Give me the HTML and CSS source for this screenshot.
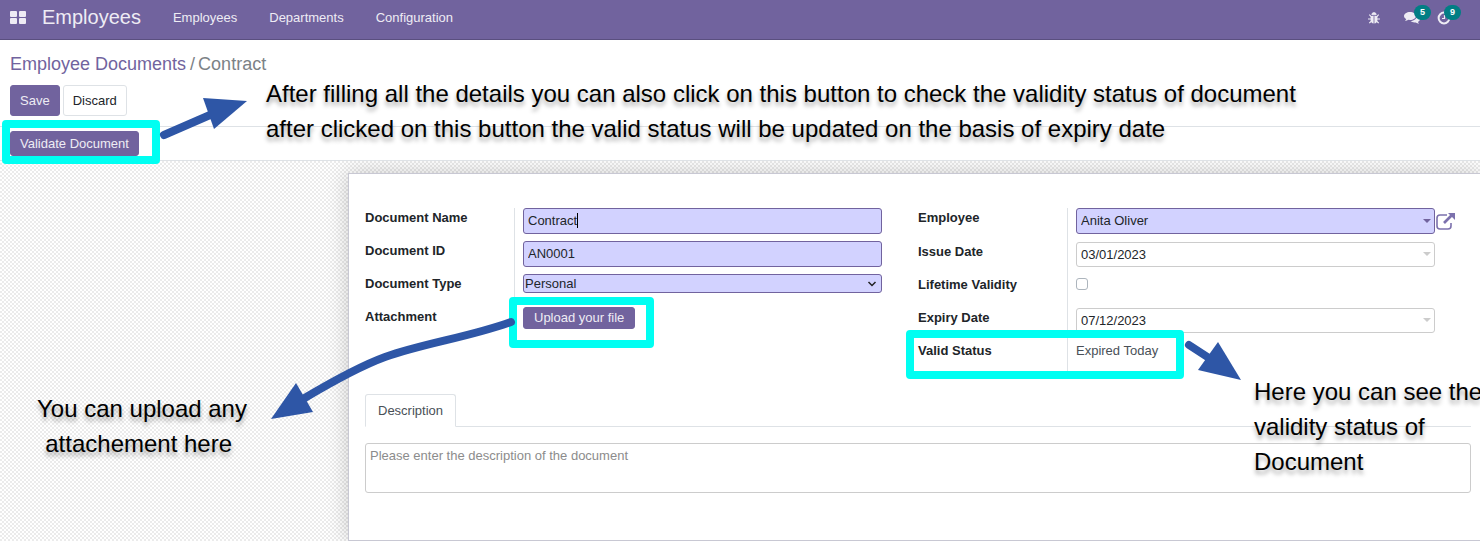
FILE: index.html
```html
<!DOCTYPE html>
<html lang="en">
<head>
<meta charset="utf-8">
<meta name="viewport" content="width=device-width, initial-scale=1">
<title>Employee Documents / Contract</title>
<link rel="stylesheet" href="styles.css">
</head>
<body>
<header class="navbar">
  <button class="apps" type="button" aria-label="Apps">
    <svg width="16" height="14" viewBox="0 0 16 14" fill="currentColor"><rect width="7" height="6" rx="1"/><rect x="9" width="7" height="6" rx="1"/><rect y="7" width="7" height="6" rx="1"/><rect x="9" y="7" width="7" height="6" rx="1"/></svg>
  </button>
  <a class="brand" href="#">Employees</a>
  <nav class="menu">
    <a href="#">Employees</a>
    <a href="#">Departments</a>
    <a href="#">Configuration</a>
  </nav>
  <div class="systray">
    <button class="debug" type="button" aria-label="Debug">
      <svg width="12" height="12" viewBox="0 0 12 12" fill="currentColor" stroke="currentColor"><path d="M3.800 2.800a2.200 2.200 0 0 1 4.400 0z" stroke-width=".8"/><path d="M2.600 4h3v7.500C4 11.500 2.600 9.800 2.600 8zM6.400 4h3v4c0 1.800-1.400 3.500-3 3.500z" stroke="none"/><path d="M3.500 4.800 1.300 2.600M3 7H0M3.500 9 1.300 11.200M8.500 4.800l2.200-2.200M9 7h3M8.500 9l2.200 2.200" stroke-width="1.200" fill="none"/></svg>
    </button>
    <button type="button" aria-label="Messages">
      <svg width="16" height="14" viewBox="0 0 16 14" fill="currentColor"><path d="M6 1C2.700 1 0 2.800 0 5c0 1.300.9 2.400 2.200 3.100C2 8.800 1.600 9.400 1 10c1.300-.1 2.500-.6 3.500-1.200L6 9c3.300 0 6-1.800 6-4S9.300 1 6 1z"/><path d="M13 4.500c.2 3-2.800 5.400-6.500 5.600 1 .9 2.400 1.400 4 1.400l1.200-.1c1 .7 2.200 1.200 3.500 1.300-.6-.6-1-1.200-1.200-1.800C15.200 10.200 16 9.200 16 8c0-1.500-1.200-2.800-3-3.500z"/></svg>
      <span class="badge">5</span>
    </button>
    <button type="button" aria-label="Activities">
      <svg width="14" height="14" viewBox="0 0 14 14" fill="none" stroke="currentColor" stroke-width="2"><circle cx="7" cy="7" r="5.400"/><path d="M7.500 4v3.500H5" stroke-width="1.200"/></svg>
      <span class="badge">9</span>
    </button>
  </div>
</header>

<section class="control-panel">
  <div class="breadcrumb"><a href="#">Employee Documents</a><span class="slash">/</span><span>Contract</span></div>
  <div class="actions">
    <button class="btn primary" type="button">Save</button>
    <button class="btn" type="button">Discard</button>
  </div>
</section>
<div class="statusbar"><button class="btn primary compact" type="button">Validate Document</button></div>

<main class="content">
  <form class="sheet">
    <div class="groups">
      <div class="group">
        <label for="name">Document Name</label>
        <div class="field"><input class="required" id="name" type="text" value="Contract"><span class="caret"></span></div>
        <label for="docid">Document ID</label>
        <div class="field"><input class="required" id="docid" type="text" value="AN0001"></div>
        <label for="type">Document Type</label>
        <div class="field select"><select class="required" id="type"><option>Personal</option></select>
          <svg class="chevron" width="10" height="6" viewBox="0 0 10 6" fill="none" stroke="#222" stroke-width="1.500"><path d="M1.500 1L5 4.500 8.500 1"/></svg></div>
        <label for="upload">Attachment</label>
        <div class="field"><button class="btn primary upload" id="upload" type="button">Upload your file</button></div>
      </div>
      <div class="group right">
        <label for="employee">Employee</label>
        <div class="field dropdown strong"><input class="required" id="employee" type="text" value="Anita Oliver">
          <button class="external" type="button" aria-label="Open employee"><svg width="20" height="18" viewBox="0 0 20 18" fill="none" stroke="currentColor" stroke-width="1.600"><path d="M11 3H4a3 3 0 0 0-3 3v8a3 3 0 0 0 3 3h8a3 3 0 0 0 3-3v-3"/><path d="M8 11l8-8" stroke-width="2.600"/><path d="M12 1h7v7z" fill="currentColor" stroke="none"/></svg></button></div>
        <label for="issue">Issue Date</label>
        <div class="field dropdown"><input id="issue" type="text" value="03/01/2023"></div>
        <label for="lifetime">Lifetime Validity</label>
        <div class="field check"><input id="lifetime" type="checkbox"></div>
        <label for="expiry">Expiry Date</label>
        <div class="field dropdown"><input id="expiry" type="text" value="07/12/2023"></div>
        <span class="label">Valid Status</span>
        <div class="field value">Expired Today</div>
      </div>
    </div>
    <div class="tabs"><button type="button" id="tab">Description</button></div>
    <textarea aria-labelledby="tab" placeholder="Please enter the description of the document"></textarea>
  </form>
</main>

<div class="annotations">
  <div class="box validate"></div>
  <div class="box attach"></div>
  <div class="box status"></div>
  <svg class="arrows" width="1480" height="541" viewBox="0 0 1480 541" fill="none" stroke="#2e56a6" stroke-width="8" stroke-linecap="round">
    <path d="M164 135l46-20"/><path d="M203 98l44 3-33 28z" fill="#2e56a6" stroke="none"/>
    <path d="M511 322C470 337 425 343 385 357Q355 368 303 399"/><path d="M296 383l17 29-42 7z" fill="#2e56a6" stroke="none"/>
    <path d="M1189 345l20 13"/><path d="M1218 342l23 38-43-10z" fill="#2e56a6" stroke="none"/>
  </svg>
  <p class="note note-validate">After filling all the details you can also click on this button to check the validity status of document<br>after clicked on this button the valid status will be updated on the basis of expiry date</p>
  <p class="note note-upload">You can upload any<br>attachement here&nbsp;</p>
  <p class="note note-status">Here you can see the<br>validity status of<br>Document</p>
</div>
</body>
</html>
```
FILE: styles.css
```css
* { box-sizing: border-box; }
body {
  margin: 0;
  position: relative;
  overflow-x: hidden;
  background: #fff;
  color: #212529;
  font: 13px/20px "Liberation Sans", Arial, sans-serif;
}
a { color: inherit; text-decoration: none; }
button, input, select, textarea { font: inherit; color: inherit; margin: 0; }
svg { display: block; }

.navbar {
  display: flex;
  align-items: center;
  height: 40px;
  padding: 0 21px 4px 10px;
  background: #71639e;
  border-bottom: 1px solid #5a4f7f;
  color: #eeecf4;
}
.apps, .systray button, .external { padding: 0; border: 0; background: none; color: inherit; }
.brand { margin-left: 16px; font-size: 20px; line-height: 22px; padding-bottom: 2px; }
.menu { display: flex; gap: 32px; margin-left: 32px; }
.systray { display: flex; gap: 18px; align-items: center; margin-left: auto; padding-right: 8px; }
.systray button { position: relative; }
.systray .debug { margin-right: 6px; }
.systray button:nth-child(2) { margin-right: -1px; }
.badge {
  position: absolute;
  left: 10px;
  top: -6px;
  width: 17px;
  height: 15px;
  border-radius: 8px;
  background: #017e84;
  color: #fff;
  font-size: 9px;
  font-weight: bold;
  line-height: 15px;
  text-align: center;
}
.systray button:last-child .badge { left: 7px; }

.control-panel { padding: 12px 10px 10px; border-bottom: 1px solid #dee2e6; }
.breadcrumb { font-size: 18px; line-height: 24px; color: #7c8286; }
.breadcrumb a { color: #71639e; }
.slash { padding: 0 3px 0 4px; }
.actions { display: flex; gap: 3px; margin-top: 9px; }
.btn {
  padding: 4px 9px;
  border: 1px solid #dee2e6;
  border-radius: 3px;
  background: #fff;
  line-height: 21px;
}
.btn.primary { background: #71639e; border-color: #71639e; color: #eeecf4; }
.btn.compact { padding: 1px 9px; }
.btn.upload { display: block; padding: 0 10px; line-height: 20px; }
.statusbar { display: flex; padding: 4px 10px; border-bottom: 1px solid #dee2e6; }

.content {
  padding: 12px 0 0 348px;
  overflow: hidden;
  background: repeating-conic-gradient(#ebebeb 0 25%, #fff 0 50%) 0 0 / 4px 4px;
}
.sheet {
  padding: 34px 9px 47px 16px;
  border: 1px solid #c8c8d3;
  border-right: 0;
  background: #fff;
  box-shadow: 0 0 20px rgba(0, 0, 0, .2);
}
.groups { display: grid; grid-template-columns: 1fr 1fr; align-items: start; }
.group { display: grid; grid-template-columns: 149px 1fr; grid-auto-rows: 33px; }
.group.right { grid-template-rows: 34px; }
.group label, .label { font-weight: bold; }
.field { position: relative; padding: 0 36px 0 8px; border-left: 1px solid #dee2e6; }
.field input[type="text"] {
  display: block;
  width: 100%;
  height: 26px;
  padding: 0 4px 2px;
  border: 1px solid #ccc;
  border-radius: 3px;
  background: #fff;
}
.group.right .field:not(.strong) input[type="text"] { height: 25px; padding-bottom: 0; }
.field .required, .field input.required { background: #d2d2ff; border: 1px solid #71639e; }
.caret { position: absolute; left: 62px; top: 5px; width: 1px; height: 15px; background: #000; }
.field select { display: block; width: 100%; height: 19px; padding: 0 1px; border-radius: 3px; appearance: none; line-height: 17px; }
.chevron { position: absolute; right: 41px; top: 7px; }
.dropdown::after {
  content: "";
  position: absolute;
  right: 40px;
  top: 10px;
  border: 4px solid transparent;
  border-top-color: #ccc;
  border-bottom: 0;
}
.dropdown.strong::after { top: 11px; border-top-color: #71639e; }
.external { position: absolute; right: 15px; top: 4px; color: #7c71ad; }
.check input {
  display: block;
  appearance: none;
  width: 12px;
  height: 12px;
  margin-top: 3px;
  border: 1px solid #adb5bd;
  border-radius: 3px;
  background: #fff;
}
.value { color: #495057; }

.tabs { display: flex; margin-top: 20px; border-bottom: 1px solid #dee2e6; }
.tabs button {
  padding: 6px 12px;
  margin-bottom: -1px;
  border: 1px solid #dee2e6;
  border-bottom-color: #fff;
  border-radius: 3px 3px 0 0;
  background: #fff;
  color: #495057;
  line-height: 19px;
}
textarea {
  display: block;
  width: 100%;
  height: 50px;
  margin-top: 16px;
  padding: 2px 4px;
  border: 1px solid #ccc;
  border-radius: 3px;
  background: #fff;
  resize: none;
}
textarea::placeholder { color: #8c8c8c; opacity: 1; }

.annotations { position: absolute; inset: 0; overflow: hidden; pointer-events: none; }
.box { position: absolute; border: 8px solid #00fff2; border-radius: 4px; }
.box.validate { left: 2px; top: 120px; width: 158px; height: 44px; }
.box.attach { left: 509px; top: 297px; width: 145px; height: 51px; }
.box.status { left: 906px; top: 330px; width: 278px; height: 49px; }
.arrows { position: absolute; left: 0; top: 0; }
.note {
  position: absolute;
  margin: 0;
  color: #000;
  font-size: 24px;
  line-height: 35px;
  white-space: nowrap;
  text-shadow: 0 4px 4px rgba(0, 0, 0, .35);
}
.note-validate { left: 266px; top: 76px; }
.note-upload { left: 37px; top: 391px; text-align: center; }
.note-status { left: 1254px; top: 374px; }
```
